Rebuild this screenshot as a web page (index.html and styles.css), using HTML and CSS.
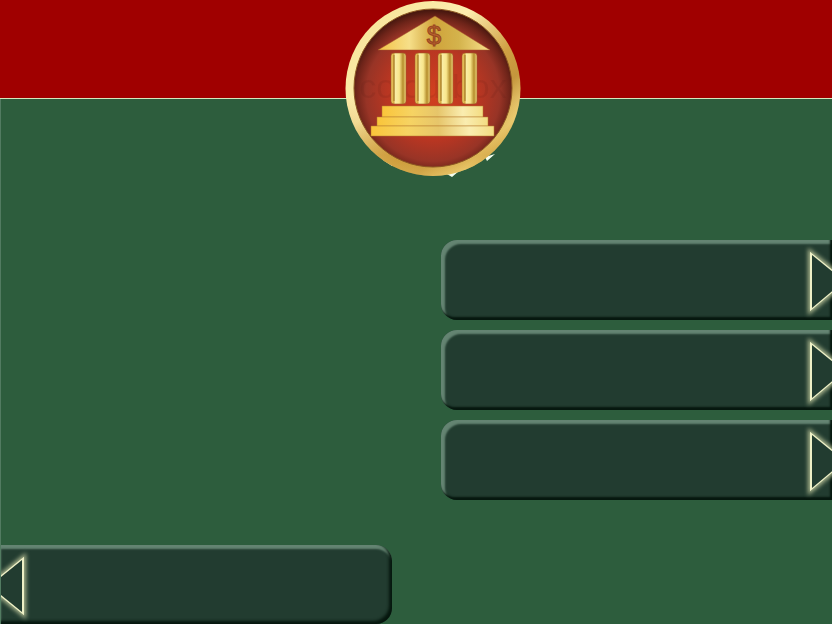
FILE: index.html
```html
<!DOCTYPE html>
<html lang="en">
<head>
<meta charset="utf-8">
<meta name="viewport" content="width=device-width, initial-scale=1">
<title>Bank</title>
<link rel="stylesheet" href="styles.css">
</head>
<body>
<header class="banner">
  <svg class="seal" viewBox="0 0 176 178" role="img" aria-label="Bank">
    <defs>
      <linearGradient id="rim" x1="0" y1="0" x2="1" y2="1">
        <stop offset="0" stop-color="#e3bb5d"/>
        <stop offset=".12" stop-color="#f8e49a"/>
        <stop offset=".38" stop-color="#fdeeb0"/>
        <stop offset=".6" stop-color="#d0a043"/>
        <stop offset=".7" stop-color="#c4963c"/>
        <stop offset=".82" stop-color="#f3d77e"/>
        <stop offset="1" stop-color="#c39339"/>
      </linearGradient>
      <linearGradient id="rimLow" x1="0" y1="0" x2="0" y2="1">
        <stop offset=".55" stop-color="#c7922c" stop-opacity="0"/>
        <stop offset=".88" stop-color="#c7922c" stop-opacity=".5"/>
        <stop offset="1" stop-color="#e5bd5c" stop-opacity=".5"/>
      </linearGradient>
      <radialGradient id="field" cx=".5" cy=".54" r=".53">
        <stop offset="0" stop-color="#d2401f"/>
        <stop offset=".55" stop-color="#b83622"/>
        <stop offset=".8" stop-color="#983426"/>
        <stop offset=".92" stop-color="#6e2419"/>
        <stop offset="1" stop-color="#49180f"/>
      </radialGradient>
      <linearGradient id="roof" x1="0" y1="0" x2="1" y2="0">
        <stop offset="0" stop-color="#f3c345"/>
        <stop offset=".28" stop-color="#f6df89"/>
        <stop offset=".5" stop-color="#d0a33a"/>
        <stop offset=".72" stop-color="#d4b34c"/>
        <stop offset="1" stop-color="#f8e18c"/>
      </linearGradient>
      <linearGradient id="pillar" x1="0" y1="0" x2="1" y2="0">
        <stop offset="0" stop-color="#f0cf6a"/>
        <stop offset=".18" stop-color="#d8ac42"/>
        <stop offset=".3" stop-color="#faeda4"/>
        <stop offset=".55" stop-color="#f8e68c"/>
        <stop offset=".8" stop-color="#b58c2b"/>
        <stop offset="1" stop-color="#f1d980"/>
      </linearGradient>
      <linearGradient id="step" x1="0" y1="0" x2="1" y2="0">
        <stop offset="0" stop-color="#fac53a"/>
        <stop offset=".3" stop-color="#f6d363"/>
        <stop offset=".55" stop-color="#e6c56a"/>
        <stop offset=".8" stop-color="#faedb0"/>
        <stop offset="1" stop-color="#f3dc82"/>
      </linearGradient>
    </defs>
    <path d="M38 160l9 6 3-6zM100 173l7 4 7-6zM140 157l10-3-8 7z" fill="#f4fff0"/>
    <circle cx="88" cy="88.500" r="87.500" fill="url(#rim)"/>
    <circle cx="88" cy="88.500" r="87.500" fill="url(#rimLow)"/>
    <circle cx="88" cy="88" r="79" fill="url(#field)" stroke="#8c5722" stroke-width="1"/>
    <text class="seal-mark" x="88" y="98" text-anchor="middle">colourbox</text>
    <path d="M33 50L90 16l55 34z" fill="url(#roof)" stroke="#a4562a" stroke-width=".5"/>
    <text class="seal-sign" x="89" y="44" text-anchor="middle">$</text>
    <g fill="url(#pillar)" stroke="#a35a26" stroke-width=".6">
      <rect x="46" y="53" width="15" height="51" rx="3"/>
      <rect x="70" y="53" width="15" height="51" rx="3"/>
      <rect x="93" y="53" width="15" height="51" rx="3"/>
      <rect x="117" y="53" width="15" height="51" rx="3"/>
    </g>
    <path d="M49 55v46M73 55v46M96 55v46M120 55v46" fill="none" stroke="#835719" stroke-width=".7"/>
    <g fill="url(#step)" stroke="#b77a2c" stroke-width=".5">
      <path d="M37 106h101v11H37z"/>
      <path d="M32 117h111v9H32z"/>
      <path d="M26 126h123v10H26z"/>
    </g>
  </svg>
</header>
<main class="screen">
  <nav class="choices" aria-label="Options">
    <button class="key key-next" type="button" aria-label="Option 1">
      <svg class="arrow" viewBox="0 0 40 80" aria-hidden="true"><path class="glow" d="M20 16v51l31-26z"/><path class="edge" d="M20 16v51l31-26z"/><path class="face" d="M20 15v53l32-27z"/></svg>
    </button>
    <button class="key key-next" type="button" aria-label="Option 2">
      <svg class="arrow" viewBox="0 0 40 80" aria-hidden="true"><path class="glow" d="M20 16v51l31-26z"/><path class="edge" d="M20 16v51l31-26z"/><path class="face" d="M20 15v53l32-27z"/></svg>
    </button>
    <button class="key key-next" type="button" aria-label="Option 3">
      <svg class="arrow" viewBox="0 0 40 80" aria-hidden="true"><path class="glow" d="M20 16v51l31-26z"/><path class="edge" d="M20 16v51l31-26z"/><path class="face" d="M20 15v53l32-27z"/></svg>
    </button>
  </nav>
  <button class="key key-back" type="button" aria-label="Back">
    <svg class="arrow" viewBox="0 0 40 80" aria-hidden="true"><path class="glow" d="M21 16v50l-31-25z"/><path class="edge" d="M21 16v50l-31-25z"/><path class="face" d="M21 15v52l-32-26z"/></svg>
  </button>
</main>
</body>
</html>
```
FILE: styles.css
```css
* {
  box-sizing: border-box;
}

body {
  display: flex;
  flex-direction: column;
  min-height: 100vh;
  margin: 0;
  background: #2d5d3d;
  font-family: "Liberation Sans", Arial, sans-serif;
}

.banner {
  position: relative;
  height: 99px;
  background: #a00000;
  border-bottom: 1px solid #d5e8bd;
}

/* The seal hangs over the lower edge of the banner. */
.seal {
  position: absolute;
  top: 0;
  left: 52%;
  width: 176px;
  height: 178px;
  transform: translateX(-50%);
}

.seal-mark {
  fill: #4a1510;
  font-size: 34px;
  opacity: 0.1;
}

.seal-sign {
  fill: #b9652f;
  stroke: #98441f;
  stroke-width: 1px;
  font-family: "Liberation Sans", sans-serif;
  font-size: 26px;
}

.screen {
  display: flex;
  flex: 1;
  flex-direction: column;
  justify-content: space-between;
  padding-top: 141px;
  border-left: 1px solid #527b61;
}

.choices {
  display: flex;
  flex-direction: column;
  align-self: flex-end;
  gap: 10px;
  width: 47%;
}

.key {
  display: flex;
  height: 80px;
  padding: 0;
  overflow: hidden;
  border: 0;
  background: #223c30;
  cursor: pointer;
}

.key-next {
  justify-content: flex-end;
  border-radius: 16px 0 0 16px;
  box-shadow:
    inset -2px -3px 2px #06170e,
    inset 4px 4px 2px #648472;
}

.key-back {
  width: 47%;
  height: 79px;
  border-radius: 0 16px 16px 0;
  box-shadow:
    inset -3px -3px 3px #06170e,
    inset 0 4px 2px #648472;
}

.arrow {
  width: 40px;
  height: 80px;
}

.glow {
  fill: none;
  stroke: #a9b48c;
  stroke-width: 8px;
  filter: blur(2px);
}

.edge {
  fill: none;
  stroke: #eef0c6;
  stroke-width: 4px;
}

.face {
  fill: #223c30;
}
```
